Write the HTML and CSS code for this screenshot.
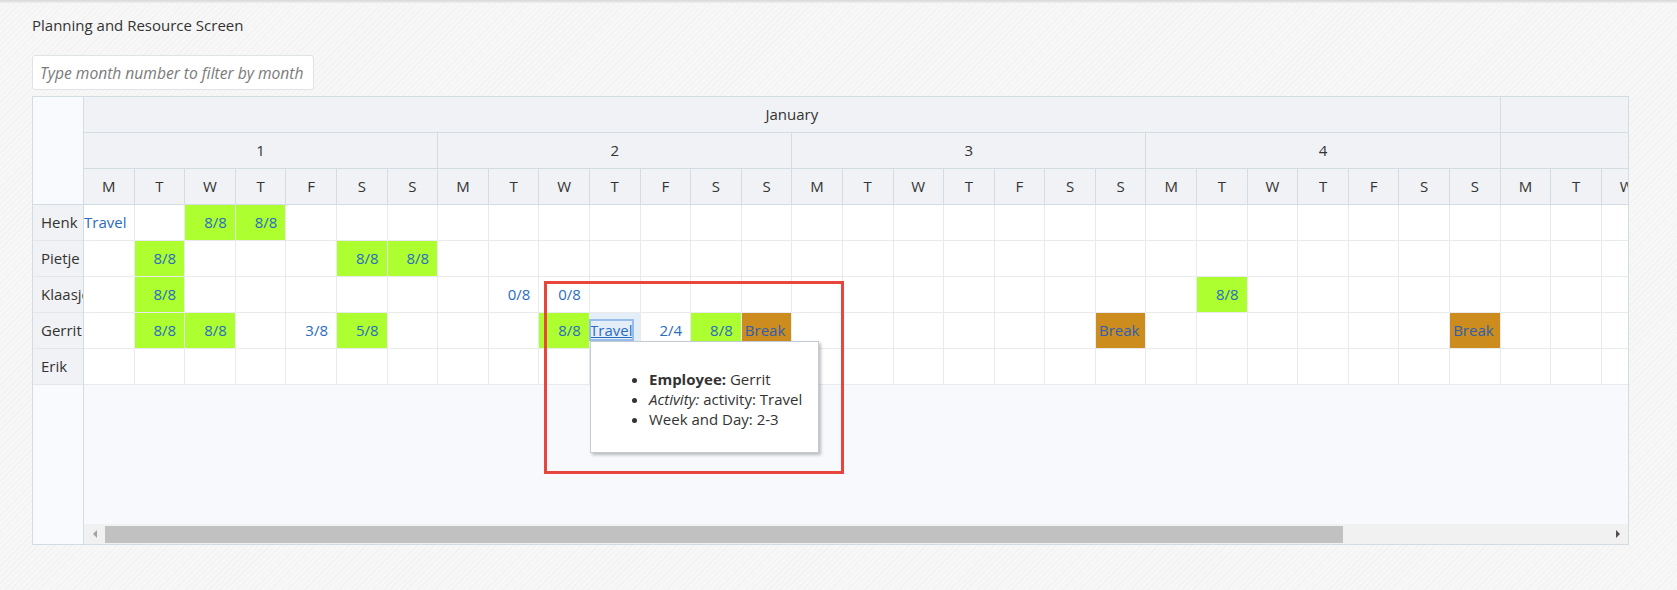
FILE: index.html
```html
<!DOCTYPE html>
<html lang="en">
<head>
<meta charset="utf-8">
<title>Planning and Resource Screen</title>
<link rel="stylesheet" href="styles.css">
</head>
<body>
<div class="topbar"></div>
<div class="page">
  <h1 class="title">Planning and Resource Screen</h1>
  <input class="filter" type="text" placeholder="Type month number to filter by month">
  <div class="planner">
    <div class="names">
      <div class="corner"></div>
      <div class="name">Henk</div>
      <div class="name">Pietje</div>
      <div class="name">Klaasje</div>
      <div class="name">Gerrit</div>
      <div class="name">Erik</div>
    </div>
    <div class="main">
      <div class="viewport">
        <div class="grid">
          <div class="h month">January</div><div class="h month next">February</div>
          <div class="h week">1</div><div class="h week">2</div><div class="h week">3</div><div class="h week">4</div><div class="h week">5</div>
          <div class="h">M</div><div class="h">T</div><div class="h">W</div><div class="h">T</div><div class="h">F</div><div class="h">S</div><div class="h">S</div>
          <div class="h">M</div><div class="h">T</div><div class="h">W</div><div class="h">T</div><div class="h">F</div><div class="h">S</div><div class="h">S</div>
          <div class="h">M</div><div class="h">T</div><div class="h">W</div><div class="h">T</div><div class="h">F</div><div class="h">S</div><div class="h">S</div>
          <div class="h">M</div><div class="h">T</div><div class="h">W</div><div class="h">T</div><div class="h">F</div><div class="h">S</div><div class="h">S</div>
          <div class="h">M</div><div class="h">T</div><div class="h">W</div><div class="h">T</div><div class="h">F</div><div class="h">S</div><div class="h">S</div>

          <div>Travel</div><div></div><div class="g">8/8</div><div class="g">8/8</div><div></div><div></div><div></div>
          <div></div><div></div><div></div><div></div><div></div><div></div><div></div>
          <div></div><div></div><div></div><div></div><div></div><div></div><div></div>
          <div></div><div></div><div></div><div></div><div></div><div></div><div></div>
          <div></div><div></div><div></div><div></div><div></div><div></div><div></div>

          <div></div><div class="g">8/8</div><div></div><div></div><div></div><div class="g">8/8</div><div class="g">8/8</div>
          <div></div><div></div><div></div><div></div><div></div><div></div><div></div>
          <div></div><div></div><div></div><div></div><div></div><div></div><div></div>
          <div></div><div></div><div></div><div></div><div></div><div></div><div></div>
          <div></div><div></div><div></div><div></div><div></div><div></div><div></div>

          <div></div><div class="g">8/8</div><div></div><div></div><div></div><div></div><div></div>
          <div></div><div>0/8</div><div>0/8</div><div></div><div></div><div></div><div></div>
          <div></div><div></div><div></div><div></div><div></div><div></div><div></div>
          <div></div><div class="g">8/8</div><div></div><div></div><div></div><div></div><div></div>
          <div></div><div></div><div></div><div></div><div></div><div></div><div></div>

          <div></div><div class="g">8/8</div><div class="g">8/8</div><div></div><div>3/8</div><div class="g">5/8</div><div></div>
          <div></div><div></div><div class="g">8/8</div><div class="sel"><a class="focus" href="#">Travel</a></div><div>2/4</div><div class="g">8/8</div><div class="brk">Break</div>
          <div></div><div></div><div></div><div></div><div></div><div></div><div class="brk">Break</div>
          <div></div><div></div><div></div><div></div><div></div><div></div><div class="brk">Break</div>
          <div></div><div></div><div></div><div></div><div></div><div></div><div></div>

          <div></div><div></div><div></div><div></div><div></div><div></div><div></div>
          <div></div><div></div><div></div><div></div><div></div><div></div><div></div>
          <div></div><div></div><div></div><div></div><div></div><div></div><div></div>
          <div></div><div></div><div></div><div></div><div></div><div></div><div></div>
          <div></div><div></div><div></div><div></div><div></div><div></div><div></div>
        </div>
      </div>
      <div class="hscroll">
        <div class="sbtn left"></div>
        <div class="track"><div class="thumb"></div></div>
        <div class="sbtn right"></div>
      </div>
    </div>
    <div class="tooltip">
      <ul>
        <li><b>Employee:</b> Gerrit</li>
        <li><i>Activity:</i> activity: Travel</li>
        <li>Week and Day: 2-3</li>
      </ul>
    </div>
    <div class="highlight"></div>
  </div>
</div>
</body>
</html>
```

FILE: styles.css
```css
* { box-sizing: border-box; }
html, body { margin: 0; }
body {
  font-family: "Open Sans", "Noto Sans", sans-serif;
  font-size: 15px;
  color: #333;
  background-color: #f5f5f5;
  background-image: repeating-linear-gradient(135deg, #f2f2f2 0, #f2f2f2 1px, #f7f7f7 1px, #f7f7f7 4px);
  height: 590px;
  overflow: hidden;
}
.topbar {
  height: 3px;
  background: linear-gradient(#d8d8d8, #eeeeee);
}
.page {
  padding: 0 48px 0 32px;
}
.title {
  margin: 12px 0 0;
  font-size: 15px;
  line-height: 20px;
  font-weight: normal;
  color: #333;
}
.filter {
  display: block;
  margin-top: 20px;
  width: 282px;
  height: 35px;
  border: 1px solid #dfe3e8;
  border-radius: 3px;
  background: #fff;
  padding: 0 3px 0 7px;
  font-family: "Open Sans", sans-serif;
  font-size: 15.6px;
  font-style: italic;
  color: #555;
  outline: none;
}
.filter::placeholder {
  color: #7a7a7a;
  font-style: italic;
}
.planner {
  position: relative;
  margin-top: 6px;
  display: flex;
  height: 449px;
  border: 1px solid #d3dbe3;
  background: #f8f9fc;
}
.names {
  width: 51px;
  flex: none;
  border-right: 1px solid #d3dbe3;
  background: #f8fafd;
  display: flex;
  flex-direction: column;
}
.corner {
  height: 108px;
  border-bottom: 1px solid #d3dbe3;
}
.name {
  height: 36px;
  line-height: 35px;
  padding-left: 8px;
  background: #f0f2f5;
  border-bottom: 1px solid #e3e7ec;
  white-space: nowrap;
  overflow: hidden;
  color: #333;
}
.main {
  flex: 1;
  min-width: 0;
  display: flex;
  flex-direction: column;
}
.viewport {
  flex: 1;
  overflow: hidden;
}
.grid {
  display: grid;
  grid-template-columns: repeat(35, 50.6px);
  grid-auto-rows: 36px;
  width: max-content;
}
.grid > div {
  border-right: 1px solid #e8eaed;
  border-bottom: 1px solid #e8eaed;
  background: #fff;
  line-height: 35px;
  text-align: right;
  padding-right: 8px;
  color: #2a6cc0;
  white-space: nowrap;
  overflow: hidden;
}
.grid > .h {
  background: #f0f2f5;
  border-color: #d3dbe3;
  text-align: center;
  padding: 0;
  color: #333;
}
.grid > .month { grid-column: span 28; }
.grid > .month.next { grid-column: span 7; }
.grid > .week { grid-column: span 7; }
.grid > .g { background: #adff2f; }
.grid > .brk { background: #cc8c1e; color: #2f5fb0; padding-right: 6px; }
.grid > .sel { background: #e4eef9; overflow: visible; padding-right: 7px; }
.focus {
  color: #2a6cc0;
  text-decoration: underline;
  outline: 2px solid #98bcec;
  outline-offset: -1px;
}
.hscroll {
  height: 20px;
  flex: none;
  display: flex;
  background: #f1f1f1;
}
.sbtn {
  width: 21px;
  flex: none;
  display: flex;
  align-items: center;
  justify-content: center;
}
.sbtn::before {
  content: "";
  border-top: 4px solid transparent;
  border-bottom: 4px solid transparent;
}
.sbtn.left::before { border-right: 4px solid #a3a3a3; }
.sbtn.right::before { border-left: 4px solid #505050; }
.track {
  flex: 1;
  padding: 2px 0 1px;
}
.thumb {
  width: 1238px;
  height: 100%;
  background: #c1c1c1;
}
.tooltip {
  position: absolute;
  left: 557px;
  top: 244px;
  width: 229px;
  height: 112px;
  background: #fff;
  border: 1px solid #c5cbd2;
  box-shadow: 2px 2px 3px rgba(0, 0, 0, 0.25);
}
.tooltip ul {
  margin: 27px 0 0;
  padding-left: 58px;
  line-height: 20px;
  color: #333;
}
.highlight {
  position: absolute;
  left: 511px;
  top: 184px;
  width: 300px;
  height: 193px;
  border: 3px solid #e8453d;
  pointer-events: none;
}
```
